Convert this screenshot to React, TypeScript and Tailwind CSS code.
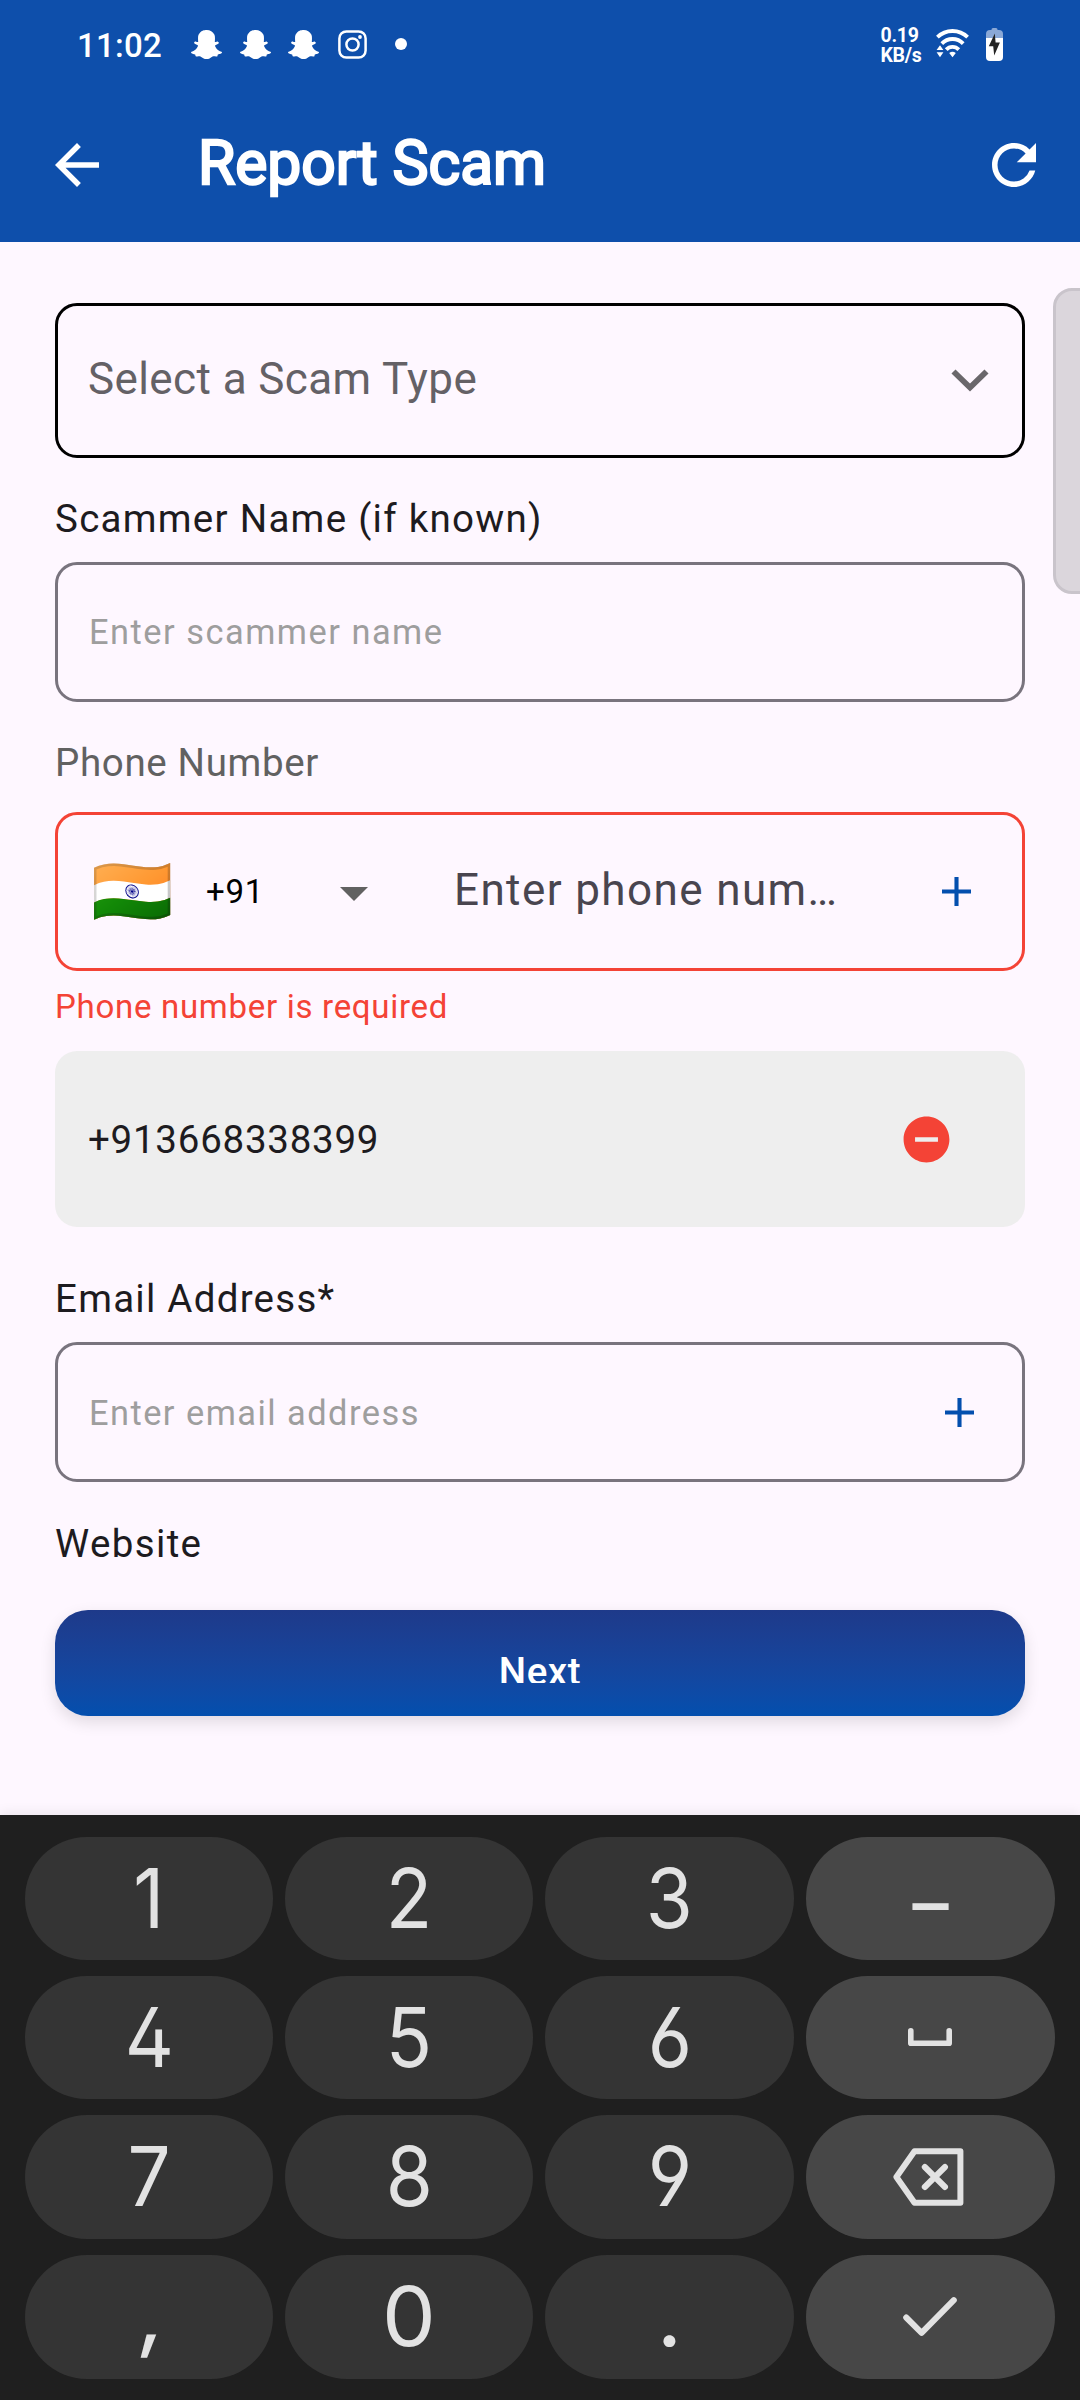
import type { ReactNode } from "react";
import { FaSnapchatGhost } from "react-icons/fa";
import { MdArrowBack, MdRefresh, MdRemoveCircle } from "react-icons/md";

function InstagramIcon() {
  return (
    <svg className="ml-px h-[29px] w-[29px]" viewBox="0 0 29 29" fill="none" stroke="white" strokeWidth="2.5">
      <rect x="1.4" y="1.4" width="26.2" height="26.2" rx="7" />
      <circle cx="14.5" cy="14.5" r="6.1" />
      <circle cx="22" cy="7" r="1.9" fill="white" stroke="none" />
    </svg>
  );
}

function WifiIcon() {
  return (
    <svg className="h-[30px] w-[34px]" viewBox="0 0 34 30" fill="none" stroke="white" strokeWidth="3.8">
      <path d="M1.4 8.2A21.5 21.5 0 0 1 31.6 8.2" />
      <path d="M5.8 14.6A14.8 14.8 0 0 1 27.2 14.6" />
      <path d="M10.2 20.6A8.6 8.6 0 0 1 22.8 20.6" />
      <path d="M13.2 24Q16.5 21.6 19.8 24L16.5 28.2ZM0.6 21L4 16.2L7.4 21ZM0.6 23.2H7.4L4 28.2Z" fill="white" stroke="none" />
    </svg>
  );
}

function BatteryIcon() {
  return (
    <svg className="h-[33px] w-[17px]" viewBox="0 0 17 33">
      <path d="M0 10V6a4 4 0 0 1 4-4h1.5V1.5A1.5 1.5 0 0 1 7 0h3a1.5 1.5 0 0 1 1.5 1.5V2H13a4 4 0 0 1 4 4v4Z" fill="#8aa8d6" />
      <path d="M0 10H17V29a4 4 0 0 1-4 4H4a4 4 0 0 1-4-4Z" fill="white" />
      <path d="M8.8 5.6L2.8 18.2H7.2L8.2 27.6L13.9 14.6H9.6Z" fill="#242424" />
    </svg>
  );
}

function PlusIcon() {
  return (
    <svg className="h-[29px] w-[29px]" viewBox="0 0 29 29">
      <path d="M0 14.5H29M14.5 0V29" stroke="#034fae" strokeWidth="4.1" />
    </svg>
  );
}

function Key({ children, accent = false }: { children: ReactNode; accent?: boolean }) {
  return (
    <button
      className={
        accent
          ? "flex items-center justify-center rounded-full bg-[#474747] pr-px text-[#e2e2e2]"
          : "flex items-center justify-center rounded-full bg-[#343434] text-[#e2e2e2]"
      }
    >
      {children}
    </button>
  );
}

function Glyph({ children, className = "scale-x-[0.93]" }: { children: string; className?: string }) {
  return (
    <span className={`font-['Inter',sans-serif] text-[82px] leading-none [font-feature-settings:'cv02','cv03','cv04'] ${className}`}>
      {children}
    </span>
  );
}

export default function App() {
  return (
    <div className="relative flex h-[2400px] w-[1080px] flex-col overflow-hidden bg-[#fef7ff] font-['Roboto',sans-serif] text-[38.5px] leading-[41px] text-[#1d1b20]">
      <header className="flex h-[242px] shrink-0 flex-col bg-[#0e4fab] text-white">
        <div className="flex h-[88px] items-center pr-[77px] pl-[77px]">
          <span className="w-[114px] pt-[3px] text-[33px] font-medium tracking-[0.26px]">11:02</span>
          <div className="flex items-center gap-[17.5px]">
            <FaSnapchatGhost size={31} />
            <FaSnapchatGhost size={31} />
            <FaSnapchatGhost size={31} />
            <InstagramIcon />
          </div>
          <span className="ml-[28px] h-3 w-3 rounded-full bg-white" />
          <div className="ml-auto flex items-center">
            <div className="w-[55.5px] pt-[3px] text-[19.5px] leading-5 font-bold tracking-[-0.3px]">
              <div>0.19</div>
              <div>KB/s</div>
            </div>
            <WifiIcon />
            <span className="ml-4">
              <BatteryIcon />
            </span>
          </div>
        </div>
        <div className="flex h-[154px] items-center pr-[33px] pl-[44px]">
          <MdArrowBack size={66} />
          <h1 className="ml-[88px] flex-1 pb-[2px] text-[60.5px] leading-[72px] [-webkit-text-stroke:2.4px_white]">
            Report Scam
          </h1>
          <MdRefresh size={66} />
        </div>
      </header>

      <main className="flex flex-col px-[55px] pt-[61px]">
        <div className="flex h-[155px] items-center justify-between rounded-[22px] border-3 border-black pr-[33px] pl-[30px]">
          <span className="pb-[3px] text-[44px] leading-[50px] tracking-[0.4px] text-[#646166]">Select a Scam Type</span>
          <svg className="mb-px h-6 w-[38px]" viewBox="0 0 38 24" fill="none" stroke="#6a676b" strokeWidth="5.8">
            <path d="M2.5 3.5L19 19.5L35.5 3.5" />
          </svg>
        </div>

        <label className="h-[104px] pt-[40px] tracking-[1.27px]">Scammer Name (if known)</label>
        <div className="flex h-[140px] items-center rounded-[22px] border-3 border-[#79747e] pl-[31px] text-[34.4px] tracking-[1.5px] text-[#9e9e9e]">
          Enter scammer name
        </div>

        <label className="h-[110px] pt-[40px] tracking-[0.65px] text-[#616161]">Phone Number</label>
        <div className="flex h-[159px] items-center rounded-[22px] border-3 border-[#f44336] pr-[51px] pl-[33px]">
          <span className="w-[115px] font-['Noto_Color_Emoji',sans-serif] text-[66px] leading-[76px]">🇮🇳</span>
          <span className="w-[134px] text-[33px] tracking-[0.8px] text-black">+91</span>
          <svg className="mt-1 h-[14px] w-7" viewBox="0 0 28 14">
            <path d="M0 0H28L14 14Z" fill="#616161" />
          </svg>
          <span className="ml-[86px] flex-1 pb-[3px] text-[44px] leading-[50px] tracking-[1.4px] text-[#49454f]">Enter phone num…</span>
          <PlusIcon />
        </div>
        <p className="h-20 pt-[15px] text-[33px] tracking-[0.71px] text-[#f44336]">Phone number is required</p>

        <div className="flex h-[176px] items-center justify-between rounded-[22px] bg-[#eeeeee] pr-[71px] pl-[33px]">
          <span className="tracking-[0.75px]">+913668338399</span>
          <MdRemoveCircle size={55} color="#f44336" />
        </div>

        <label className="h-[115px] pt-[51px] tracking-[1.25px]">Email Address*</label>
        <div className="flex h-[140px] items-center justify-between rounded-[22px] border-3 border-[#79747e] pr-[48px] pl-[31px] text-[34.4px] tracking-[1.46px] text-[#9e9e9e]">
          <span className="pt-[2px]">Enter email address</span>
          <PlusIcon />
        </div>

        <label className="h-[128px] pt-[41px] tracking-[1.36px]">Website</label>
        <button className="flex h-[106px] justify-center rounded-[33px] bg-linear-to-b from-[#1e3a8a] to-[#034fae] pt-[40px] text-white shadow-[0_6px_16px_rgba(0,0,0,0.12)]">
          <span className="h-[33px] overflow-hidden leading-[43px] font-medium tracking-[0.57px]">Next</span>
        </button>
      </main>

      <span className="absolute top-[288px] right-[-3px] h-[306px] w-[30px] rounded-l-[19px] border-3 border-[#c9c4cb] bg-[#dbd6dc]" />

      <section className="mt-auto grid h-[585px] shrink-0 grid-cols-[248px_248px_249px_249px] grid-rows-[123px_123px_124px_124px] gap-x-3 gap-y-4 bg-[#1f1f1f] px-[25px] pt-[22px] shadow-[0_-2px_12px_rgba(0,0,0,0.08)]">
        <Key><Glyph>1</Glyph></Key>
        <Key><Glyph>2</Glyph></Key>
        <Key><Glyph>3</Glyph></Key>
        <Key accent><Glyph className="scale-x-[0.88] pt-[8px]">–</Glyph></Key>
        <Key><Glyph>4</Glyph></Key>
        <Key><Glyph>5</Glyph></Key>
        <Key><Glyph>6</Glyph></Key>
        <Key accent>
          <svg className="mb-px h-[18px] w-11" viewBox="0 0 44 18" fill="none" stroke="currentColor" strokeWidth="5.6" strokeLinecap="round" strokeLinejoin="round">
            <path d="M2.8 2.8V15.2H41.2V2.8" />
          </svg>
        </Key>
        <Key><Glyph>7</Glyph></Key>
        <Key><Glyph>8</Glyph></Key>
        <Key><Glyph>9</Glyph></Key>
        <Key accent>
          <svg className="mr-[3px] h-[58px] w-[71px]" viewBox="0 0 71 58" fill="none" stroke="currentColor" strokeWidth="6" strokeLinecap="round" strokeLinejoin="round">
            <path d="M21.5 3.2H67.4V54.8H21.5L3.4 29ZM31.8 19L52 39M52 19L31.8 39" />
          </svg>
        </Key>
        <Key><Glyph className="-skew-x-6 pb-[6px] pl-[6px] font-medium">,</Glyph></Key>
        <Key><Glyph className="scale-x-[1.04]">0</Glyph></Key>
        <Key><Glyph className="font-medium">.</Glyph></Key>
        <Key accent>
          <svg className="mb-px h-[39px] w-[54px]" viewBox="0 0 54 39" fill="none" stroke="currentColor" strokeWidth="6" strokeLinecap="round" strokeLinejoin="round">
            <path d="M3.2 20.5L18.6 35.8L50.8 3.2" />
          </svg>
        </Key>
      </section>
    </div>
  );
}
